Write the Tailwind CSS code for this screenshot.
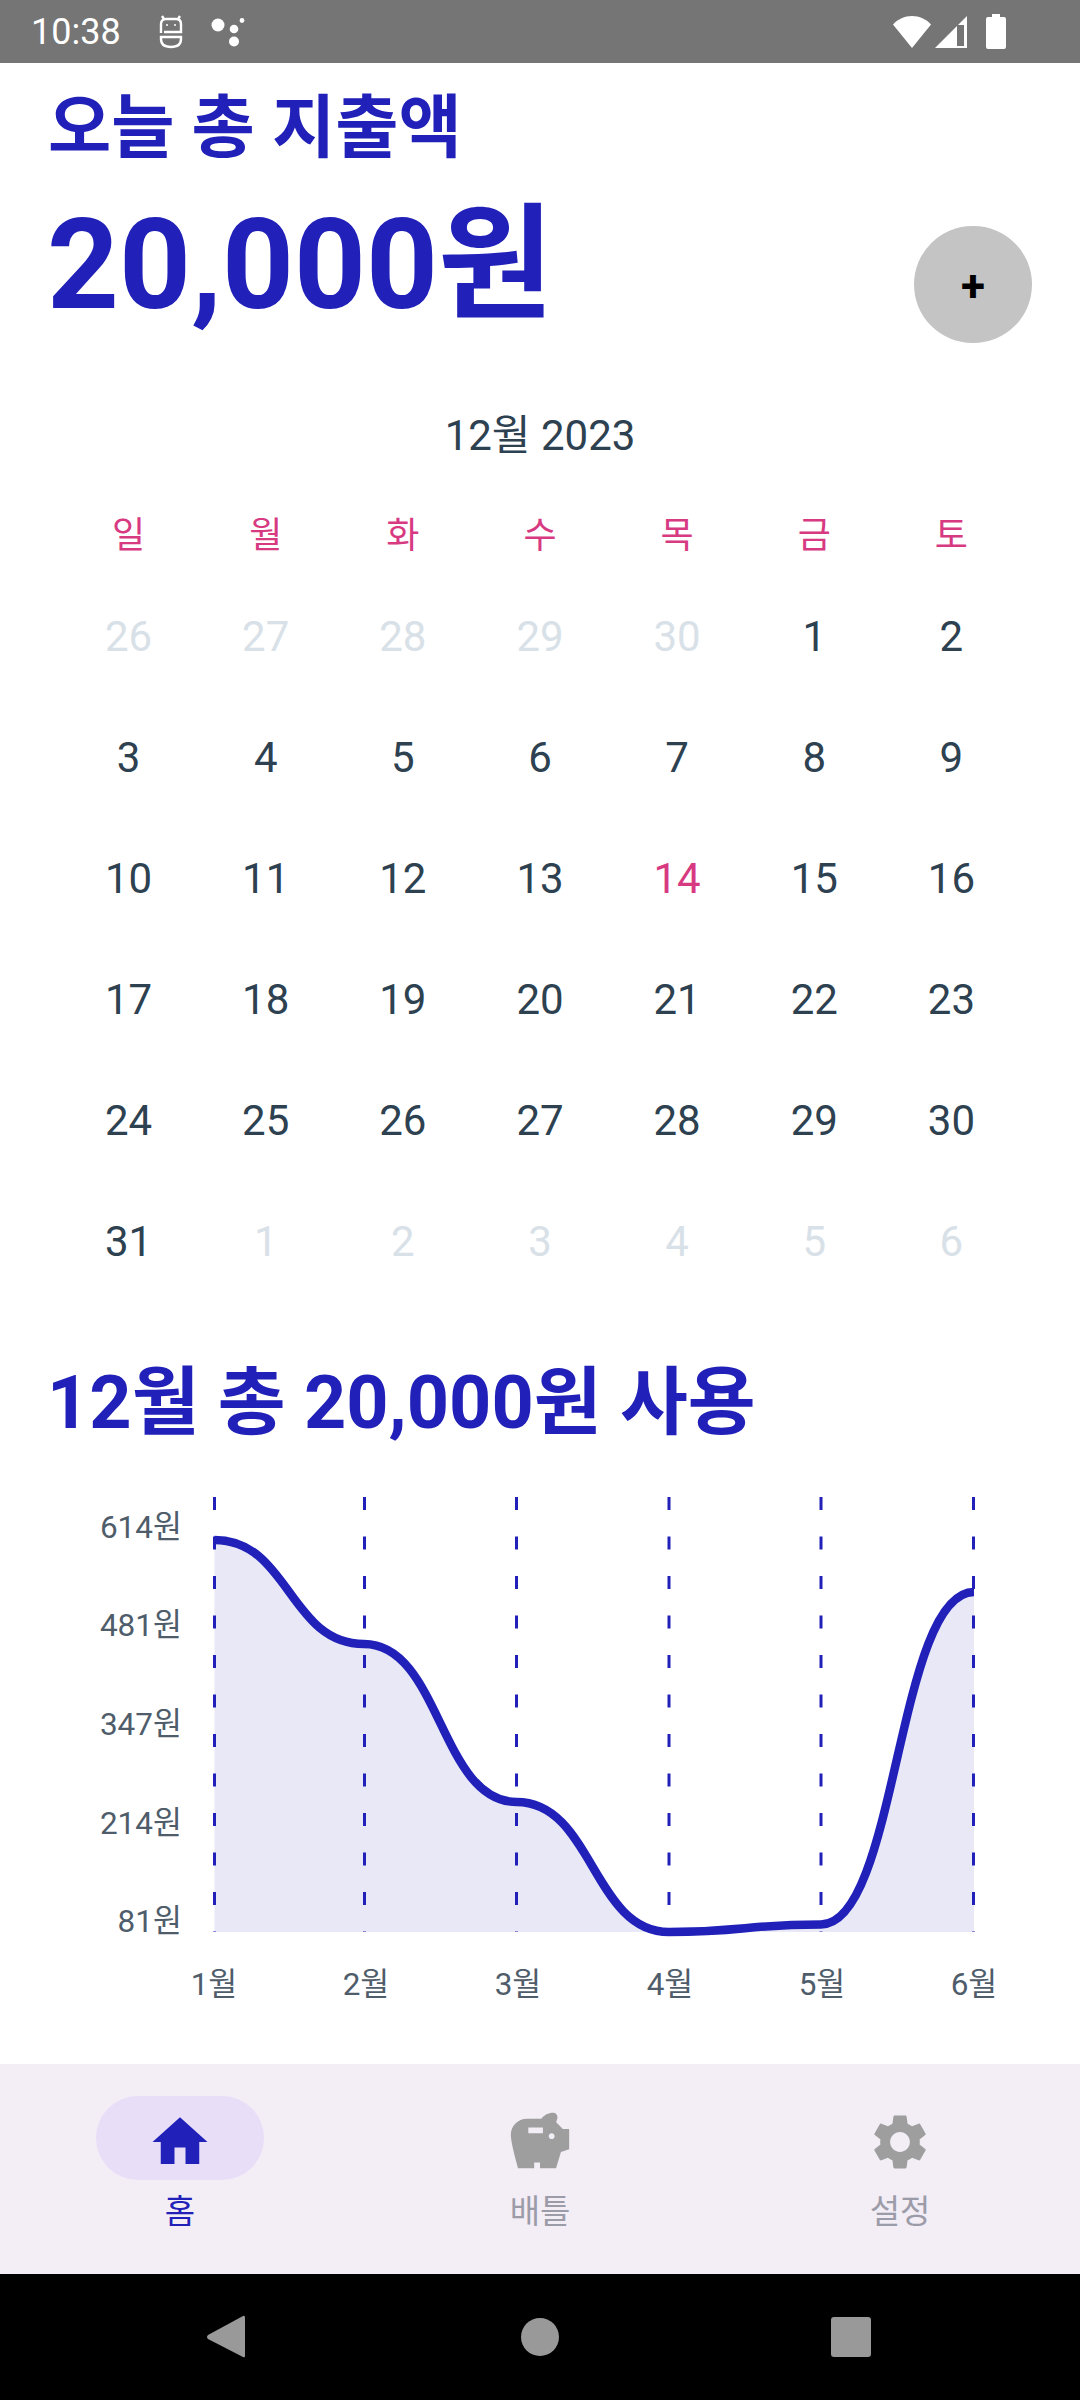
<!DOCTYPE html>
<html lang="ko">
<head>
<meta charset="UTF-8" />
<meta name="viewport" content="width=device-width, initial-scale=1.0" />
<script src="https://cdn.jsdelivr.net/npm/@tailwindcss/browser@4"></script>
<title>지출 홈</title>
</head>
<body class="bg-white font-[family-name:Roboto,'Noto_Sans_CJK_KR',sans-serif]">
<div class="w-[1080px] h-[2400px] flex flex-col overflow-hidden">

  <!-- status bar -->
  <div class="h-[63px] shrink-0 bg-[#757575] flex items-center text-white pl-[31px] pr-[74px]">
    <span class="text-[36px] leading-none w-[127px]">10:38</span>
    <svg class="w-[26px] h-[34px]" viewBox="0 0 26 34" fill="none" stroke="white" stroke-width="2.4">
      <path d="M3 18V9q0-5 5-5h10q5 0 5 5v8H6" />
      <path d="M23 22H3v2q0 8 10 8t10-8z" />
      <path d="M6 4 4 1M20 4l2-3" />
      <circle cx="9" cy="10" r="1" fill="white" stroke="none" /><circle cx="17" cy="10" r="1" fill="white" stroke="none" />
    </svg>
    <svg class="w-[34px] h-[30px] ml-[27px]" viewBox="0 0 34 30" fill="white">
      <circle cx="7" cy="8" r="6.5" /><circle cx="23" cy="12" r="4.3" /><circle cx="23" cy="24.500" r="5" /><circle cx="31" cy="3.500" r="2.400" />
    </svg>
    <div class="flex-1"></div>
    <svg class="w-[40px] h-[34px]" viewBox="0 0 40 34" fill="white"><path d="M20 33 1 9.500C6 4 12.500 1 20 1s14 3 19 8.500z" /></svg>
    <svg class="w-[34px] h-[34px] ml-[2px]" viewBox="0 0 34 34"><path d="M33 1v32H1z" fill="white" /><path d="M23 10h7v21h-7z" fill="#757575" /></svg>
    <svg class="w-[20px] h-[35px] ml-[18px]" viewBox="0 0 20 35" fill="white"><path d="M6 0h8v3h4q2 0 2 2v28q0 2-2 2H2q-2 0-2-2V5q0-2 2-2h4z" /></svg>
  </div>

  <!-- today's total -->
  <div class="relative pl-[47px] h-[315px] shrink-0 text-[#2121b9] font-bold">
    <h1 class="text-[68.75px] leading-[88px] mt-[22px] ml-[1px]">오늘 총 지출액</h1>
    <p class="text-[125.5px] leading-[145px] mt-[20px]">20,000원</p>
    <button class="absolute left-[914px] top-[163px] w-[118px] h-[117px] rounded-full bg-[#c4c4c4] flex items-center justify-center text-black text-[44px] font-bold leading-none pt-[2px]">+</button>
  </div>

  <!-- calendar -->
  <div class="px-[60px] shrink-0 text-[#2d4150] text-center">
    <p class="text-[42px] leading-[58px] mt-[29px]">12월 2023</p>
    <div class="grid grid-cols-7 mt-[47px] text-[#d83a82] text-[36px] leading-[48px]">
      <span>일</span><span>월</span><span>화</span><span>수</span><span>목</span><span>금</span><span>토</span>
    </div>
    <div class="grid grid-cols-7 auto-rows-[121px] items-center text-[42px] leading-[58px] mt-[16px]">
      <span class="text-[#d9e1e8]">26</span><span class="text-[#d9e1e8]">27</span><span class="text-[#d9e1e8]">28</span><span class="text-[#d9e1e8]">29</span><span class="text-[#d9e1e8]">30</span><span>1</span><span>2</span>
      <span>3</span><span>4</span><span>5</span><span>6</span><span>7</span><span>8</span><span>9</span>
      <span>10</span><span>11</span><span>12</span><span>13</span><span class="text-[#d83a82]">14</span><span>15</span><span>16</span>
      <span>17</span><span>18</span><span>19</span><span>20</span><span>21</span><span>22</span><span>23</span>
      <span>24</span><span>25</span><span>26</span><span>27</span><span>28</span><span>29</span><span>30</span>
      <span>31</span><span class="text-[#d9e1e8]">1</span><span class="text-[#d9e1e8]">2</span><span class="text-[#d9e1e8]">3</span><span class="text-[#d9e1e8]">4</span><span class="text-[#d9e1e8]">5</span><span class="text-[#d9e1e8]">6</span>
    </div>
  </div>

  <!-- monthly chart -->
  <h2 class="pl-[47px] text-[73.75px] leading-[100px] font-bold text-[#2121b9] mt-[51px] shrink-0">12월 총 20,000원 사용</h2>
  <svg class="w-[1080px] h-[560px] shrink-0 mt-[8px]" viewBox="0 1460 1080 560" fill="#4f5d6b" font-size="31.5">
    <path d="M214.500 1539C289.250 1539 289.250 1643 364 1643C440.250 1643 440.250 1801 516.500 1801C592.750 1801 592.750 1931 669 1931C745 1931 745 1923.500 821 1923.500C897 1923.500 897 1591 974 1591V1931H214.500z" fill="#e8e8f6" />
    <g stroke="#2121b9" stroke-width="3" stroke-dasharray="13 26.500">
      <path d="M214.500 1496V1931" /><path d="M364.500 1496V1931" /><path d="M516.500 1496V1931" />
      <path d="M669 1496V1931" /><path d="M821 1496V1931" /><path d="M973.500 1496V1931" />
    </g>
    <path d="M214.500 1539C289.250 1539 289.250 1643 364 1643C440.250 1643 440.250 1801 516.500 1801C592.750 1801 592.750 1931 669 1931C745 1931 745 1923.500 821 1923.500C897 1923.500 897 1591 974 1591" fill="none" stroke="#2121b9" stroke-width="8.500" />
    <g text-anchor="end">
      <text x="182" y="1537">614원</text><text x="182" y="1635">481원</text><text x="182" y="1734">347원</text><text x="182" y="1833">214원</text><text x="182" y="1931">81원</text>
    </g>
    <g text-anchor="middle">
      <text x="214" y="1994">1월</text><text x="366" y="1994">2월</text><text x="518" y="1994">3월</text><text x="670" y="1994">4월</text><text x="822" y="1994">5월</text><text x="974" y="1994">6월</text>
    </g>
  </svg>

  <div class="flex-1"></div>

  <!-- bottom tabs -->
  <nav class="h-[210px] shrink-0 bg-[#f3edf6] flex pt-[32px] text-[33px] leading-[44px] text-center">
    <div class="flex-1 flex flex-col items-center text-[#2121b9]">
      <div class="w-[168px] h-[84px] rounded-full bg-[#e8def8] flex items-center justify-center">
        <svg class="w-[66px] h-[66px] mt-[8px]" viewBox="0 0 24 24" fill="#2121b9"><path d="M10 20v-6h4v6h5v-8h3L12 3 2 12h3v8z" /></svg>
      </div>
      <span class="mt-[10px]">홈</span>
    </div>
    <div class="flex-1 flex flex-col items-center text-[#9c9ca8]">
      <div class="h-[84px] flex items-center justify-center">
        <svg class="w-[70px] h-[70px] mt-[8px]" viewBox="0 0 24 24" fill="#9e9e9e"><path d="M19.830 7.500l-2.270-2.270c.07-.42.18-.81.32-1.150.08-.18.12-.37.12-.58C18 2.670 17.330 2 16.500 2c-1.640 0-3.090.79-4 2h-5C4.460 4 2 6.460 2 9.500S4.500 21 4.500 21H10v-2h2v2h5.500l1.680-5.590 2.820-.94V7.500h-2.170zM13 9H8V7h5v2zm3 2c-.55 0-1-.45-1-1s.45-1 1-1 1 .45 1 1-.45 1-1 1z" /></svg>
      </div>
      <span class="mt-[10px]">배틀</span>
    </div>
    <div class="flex-1 flex flex-col items-center text-[#9c9ca8]">
      <div class="h-[84px] flex items-center justify-center">
        <svg class="w-[66px] h-[66px] mt-[8px]" viewBox="0 0 24 24" fill="#9e9e9e"><path d="M19.140 12.940c.04-.3.06-.61.06-.94 0-.32-.02-.64-.07-.94l2.030-1.580c.18-.14.23-.41.12-.61l-1.920-3.320c-.12-.22-.37-.29-.59-.22l-2.390.96c-.5-.38-1.030-.7-1.620-.94l-.36-2.540c-.04-.24-.24-.41-.48-.41h-3.840c-.24 0-.43.17-.47.41l-.36 2.540c-.59.24-1.130.57-1.620.94l-2.390-.96c-.22-.08-.47 0-.59.22L2.740 8.870c-.12.21-.08.47.12.61l2.030 1.580c-.05.3-.09.63-.09.94s.02.64.07.94l-2.030 1.580c-.18.14-.23.41-.12.61l1.920 3.320c.12.22.37.29.59.22l2.390-.96c.5.38 1.030.7 1.620.94l.36 2.540c.05.24.24.41.48.41h3.840c.24 0 .44-.17.47-.41l.36-2.540c.59-.24 1.130-.56 1.620-.94l2.390.96c.22.08.47 0 .59-.22l1.920-3.320c.12-.22.07-.47-.12-.61l-2.010-1.580zM12 15.600c-1.980 0-3.600-1.620-3.600-3.600s1.620-3.600 3.600-3.600 3.600 1.620 3.600 3.600-1.620 3.600-3.600 3.600z" /></svg>
      </div>
      <span class="mt-[10px]">설정</span>
    </div>
  </nav>

  <!-- android nav -->
  <div class="h-[126px] shrink-0 bg-black relative">
    <svg class="absolute left-[205px] top-[41px] w-[40px] h-[44px]" viewBox="0 0 40 44" fill="#999"><path d="M38 1q2-1 2 2v38q0 2-2 1L3 24q-2-2 0-4z" /></svg>
    <div class="absolute left-[521px] top-[44px] w-[38px] h-[38px] rounded-full bg-[#999]"></div>
    <div class="absolute left-[831px] top-[43px] w-[40px] h-[40px] rounded-[3px] bg-[#999]"></div>
  </div>
</div>
</body>
</html>
